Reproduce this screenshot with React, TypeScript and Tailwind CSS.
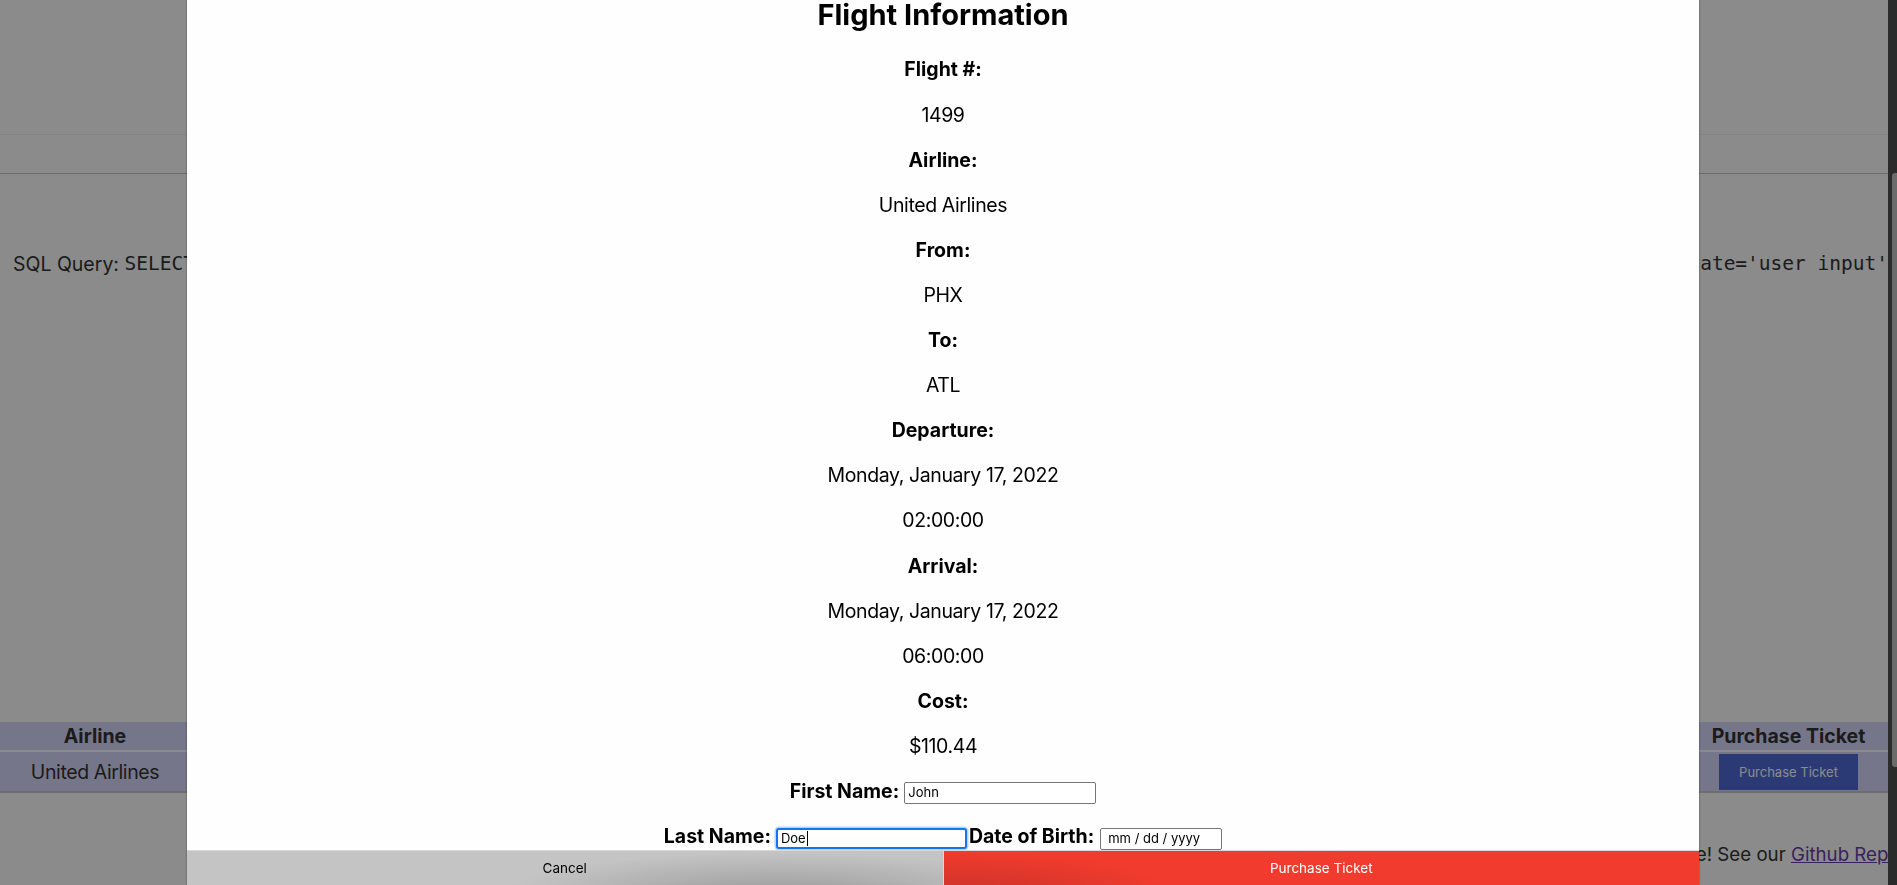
import React from 'react';

const details = [
  { label: 'Flight #:', values: ['1499'] },
  { label: 'Airline:', values: ['United Airlines'] },
  { label: 'From:', values: ['PHX'] },
  { label: 'To:', values: ['ATL'] },
  { label: 'Departure:', values: ['Monday, January 17, 2022', '02:00:00'] },
  { label: 'Arrival:', values: ['Monday, January 17, 2022', '06:00:00'] },
  { label: 'Cost:', values: ['$110.44'] },
];

const columns = ['Airline', 'Flight #', 'From', 'To', 'Departure', 'Arrival', 'Cost', 'Purchase Ticket'];

const FlightModal: React.FC = () => {
  return (
    <div className="fixed top-0 bottom-0 left-[187px] flex w-[1512px] flex-col bg-[#fefefe] text-black shadow-[0_0_2px_rgba(0,0,0,0.45)]">
      <div className="flex flex-1 flex-col items-center gap-[20.1px] overflow-hidden text-[19.5px] leading-[25px]">
        <h2 className="mb-[7.4px] text-[29px] font-bold leading-[30px]">Flight Information</h2>
        {details.map((d) => (
          <React.Fragment key={d.label}>
            <div className="h-[25px] font-bold">{d.label}</div>
            {d.values.map((v, i) => (
              <div key={i} className="h-[25px] tracking-[-0.4px]">{v}</div>
            ))}
          </React.Fragment>
        ))}

        <div className="flex h-[25px] items-center justify-center">
          <label className="font-bold">First Name:</label>
          <input
            readOnly
            defaultValue="John"
            className="mt-[3px] ml-[5px] h-[22px] w-[192px] rounded-[2px] border border-[#767676] bg-white px-[3px] text-[13px] text-black outline-none"
          />
        </div>

        <div className="flex h-[25px] items-center justify-center">
          <label className="font-bold">Last Name:</label>
          <div className="mt-[4px] ml-[5px] flex h-[21px] w-[191px] items-center rounded-[3px] border-2 border-[#1573ef] bg-white px-[3px] text-[13px] ring-[1.5px] ring-[#b5d5fb]">
            <span>Doe</span>
            <span className="ml-[1px] h-[15px] w-px bg-black" />
          </div>
          <label className="ml-[2px] font-bold">Date of Birth:</label>
          <div className="mt-[4px] ml-[6px] flex h-[22px] w-[122px] items-center rounded-[2px] border border-[#767676] bg-white px-[7px] text-[13px]">
            mm / dd / yyyy
          </div>
        </div>
      </div>

      <div className="flex h-[35px] border-t border-[#d8d8d8] text-[13.5px]">
        <button className="flex-1 bg-[radial-gradient(ellipse_45%_150%_at_78%_125%,#9c9c9c,#c4c4c4_80%)] text-black">
          Cancel
        </button>
        <button className="flex-1 border-l border-[#d8d8d8] bg-[radial-gradient(ellipse_35%_150%_at_2%_125%,#cc3328,#f03b2e_80%)] text-white">
          Purchase Ticket
        </button>
      </div>
    </div>
  );
};

export default function App() {
  return (
    <div className="flex h-screen w-screen overflow-hidden bg-white font-['Inter',sans-serif] text-[19.5px] leading-[24px] text-[#333]">
      <main className="relative min-w-0 flex-1 overflow-hidden">
        <div className="h-[135px] border-b border-[#f2f2f2]" />
        <div className="h-[39px] border-b border-[#c4c4c4]" />

        <p className="mt-[78px] flex whitespace-nowrap pl-[13px]">
          <span className="shrink-0">SQL Query:&nbsp;</span>
          <code className="min-w-0 flex-1 overflow-hidden font-['DejaVu_Sans_Mono',monospace]">
            SELECT * FROM flights WHERE departure_airport='user input' AND arrival_airport='user input' AND departure_
          </code>
          <code className="shrink-0 font-['DejaVu_Sans_Mono',monospace]">date='user input'</code>
        </p>

        <table className="mt-[446px] w-full table-fixed border-collapse bg-[#d8d8ff]">
          <colgroup>
            <col className="w-[190px]" />
            <col />
            <col />
            <col />
            <col />
            <col />
            <col />
            <col className="w-[199px]" />
          </colgroup>
          <thead>
            <tr className="h-[29px] border-b-2 border-white">
              {columns.map((c) => (
                <th key={c} className="font-bold">{c}</th>
              ))}
            </tr>
          </thead>
          <tbody>
            <tr className="h-[41px] border-b-2 border-[#cacaca] text-center tracking-[-0.4px]">
              <td>United Airlines</td>
              <td>1499</td>
              <td>PHX</td>
              <td>ATL</td>
              <td>2022-01-17 02:00:00</td>
              <td>2022-01-17 06:00:00</td>
              <td>$110.44</td>
              <td>
                <button className="h-[36px] w-[139px] bg-[#4f6ad5] text-[13px] tracking-normal text-white">Purchase Ticket</button>
              </td>
            </tr>
          </tbody>
        </table>

        <p className="mt-[50px] flex justify-end overflow-hidden whitespace-nowrap text-[18.7px]">
          <span className="-mr-[61px]">
            This site is intentionally vulnerable to SQL injection, so have fun trying it out here! See our{' '}
            <a href="#" className="text-[#6e3aa8] underline">Github Repository</a>
          </span>
        </p>

        <div className="fixed top-0 bottom-0 left-0 right-[9px] bg-black/[0.455]" />
        <FlightModal />
      </main>

      <aside className="w-[9px] shrink-0 bg-[#2b2b2b]">
        <div className="mt-[173px] ml-[4px] h-[594px] w-[5px] rounded-l-[3px] bg-[#6b6b6b]" />
      </aside>
    </div>
  );
}
